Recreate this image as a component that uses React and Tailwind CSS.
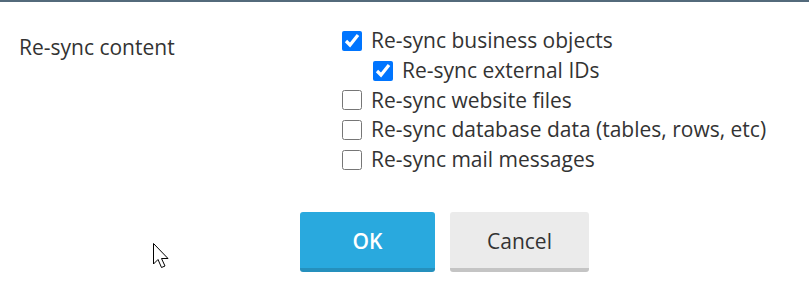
import React from "react";

const options = [
  { label: "Re-sync business objects", checked: true, indent: false },
  { label: "Re-sync external IDs", checked: true, indent: true },
  { label: "Re-sync website files", checked: false, indent: false },
  { label: "Re-sync database data (tables, rows, etc)", checked: false, indent: false },
  { label: "Re-sync mail messages", checked: false, indent: false },
];

export default function App() {
  return (
    <div
      className="relative w-[809px] h-[300px] bg-white text-[#333333] overflow-hidden"
      style={{ fontFamily: '"Open Sans", sans-serif' }}
    >
      <div className="h-[2px] bg-[#536a7b]" />
      <div className="flex pt-[24px]">
        <div className="w-[342px] pl-[19px] pt-[6px] text-[21px] leading-[30px]">Re-sync content</div>
        <div className="flex flex-col">
          {options.map((o) => (
            <label
              key={o.label}
              className={`flex items-center h-[29.75px] text-[21px] ${o.indent ? "pl-[31px]" : ""}`}
            >
              <input
                type="checkbox"
                defaultChecked={o.checked}
                className="w-[20px] h-[20px] m-0 mr-[9px] accent-[#0075ff]"
              />
              <span>{o.label}</span>
            </label>
          ))}
        </div>
      </div>
      <div className="flex gap-[15px] pl-[300px] pt-[37px]">
        <button className="w-[135px] h-[60px] pt-[4px] rounded-[3px] bg-[#29a9de] border-b-[4px] border-[#2590bd] text-white text-[21px] font-semibold">
          OK
        </button>
        <button className="w-[139px] h-[60px] pt-[4px] rounded-[3px] bg-[#ebebeb] border-b-[4px] border-[#c4c4c4] text-[#333333] text-[21px]">
          Cancel
        </button>
      </div>
      <svg
        className="absolute left-[152px] top-[242px]"
        width="22"
        height="30"
        viewBox="0 0 22 30"
      >
        <path
          d="M1.5 1.5 L1.5 22 L6 17.5 L9.5 25.5 L13 24 L9.5 16.5 L16 16.5 Z"
          fill="white"
          stroke="black"
          strokeWidth="1"
          strokeLinejoin="miter"
        />
      </svg>
    </div>
  );
}
